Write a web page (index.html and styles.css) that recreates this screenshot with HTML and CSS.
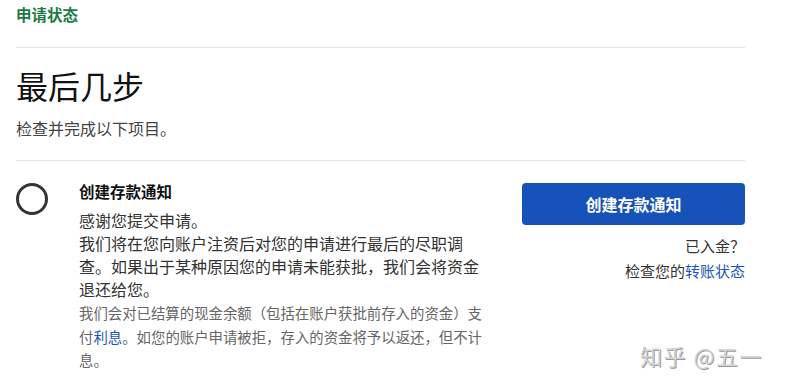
FILE: index.html
```html
<!DOCTYPE html>
<html lang="zh-CN">
<head>
<meta charset="utf-8">
<link rel="stylesheet" href="styles.css">
</head>
<body>
<div class="page">
  <div class="crumb">申请状态</div>
  <hr class="rule rule-top">
  <h1 class="title">最后几步</h1>
  <p class="subtitle">检查并完成以下项目。</p>
  <hr class="rule rule-mid">
  <div class="task">
    <div class="status"><span class="ring"></span></div>
    <div class="task-body">
      <div class="task-title">创建存款通知</div>
      <p class="task-text">感谢您提交申请。<br>我们将在您向账户注资后对您的申请进行最后的尽职调查。如果出于某种原因您的申请未能获批，我们会将资金退还给您。</p>
      <p class="task-note">我们会对已结算的现金余额（包括在账户获批前存入的资金）支付<a class="link" href="#">利息</a>。如您的账户申请被拒，存入的资金将予以返还，但不计息。</p>
    </div>
    <div class="task-side">
      <button class="btn">创建存款通知</button>
      <div class="side-text">已入金？<br>检查您的<a class="link" href="#">转账状态</a></div>
    </div>
  </div>
</div>
<div class="watermark">知乎 @五一</div>
</body>
</html>
```
FILE: styles.css
```css
html, body {
  margin: 0;
  padding: 0;
  background: #fff;
}
body {
  font-family: "Noto Sans CJK SC", "Noto Sans", sans-serif;
  color: #222;
  width: 785px;
  height: 392px;
  overflow: hidden;
  position: relative;
}
.page {
  width: 729px;
  padding: 4px 0 0 16px;
}
.crumb {
  font-size: 15.5px;
  line-height: 20px;
  font-weight: 700;
  color: #1d7a47;
}
.rule {
  border: 0;
  border-top: 1px solid #e2e2e2;
  margin: 0;
}
.rule-top {
  margin-top: 23px;
}
.title {
  margin: 17px 0 0 0;
  font-size: 32px;
  line-height: 40px;
  font-weight: 400;
  color: #111;
}
.subtitle {
  margin: 12px 0 0 0;
  font-size: 16px;
  line-height: 22px;
  color: #444;
}
.rule-mid {
  margin-top: 21px;
}
.task {
  display: flex;
  margin-top: 19px;
}
.status {
  width: 63px;
  flex: none;
  padding-top: 3px;
}
.ring {
  display: block;
  width: 26px;
  height: 26px;
  border: 3px solid #333;
  border-radius: 50%;
}
.task-body {
  width: 405px;
  flex: none;
}
.task-title {
  font-size: 15.5px;
  line-height: 22px;
  font-weight: 700;
  color: #111;
}
.task-text {
  margin: 7px 0 0 0;
  font-size: 16px;
  line-height: 23px;
  color: #333;
}
.task-note {
  margin: 0;
  font-size: 14.4px;
  line-height: 23.5px;
  color: #666;
}
.link {
  color: #1a56b8;
  text-decoration: none;
}
.task-side {
  margin-left: auto;
  width: 223px;
  padding-top: 3px;
  text-align: right;
}
.btn {
  display: block;
  width: 223px;
  height: 42px;
  border: 0;
  border-radius: 4px;
  background: #1652b8;
  color: #fff;
  font-family: inherit;
  font-size: 16px;
  font-weight: 700;
}
.side-text {
  margin-top: 8px;
  font-size: 15px;
  line-height: 25px;
  color: #333;
}
.watermark {
  position: absolute;
  left: 640px;
  top: 341px;
  font-size: 22px;
  line-height: 28px;
  color: #d4d4d4;
  text-shadow: 1px 1px 0 #9a9a9a;
  letter-spacing: 1.5px;
}
```
